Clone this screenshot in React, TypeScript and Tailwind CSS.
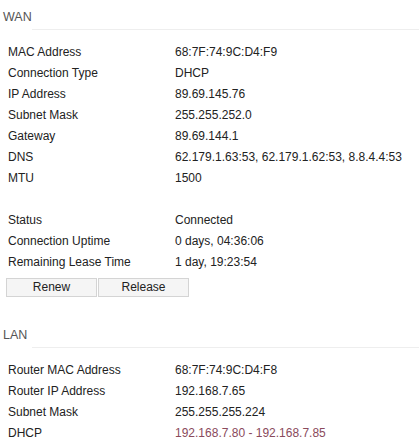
const WAN_ROWS: [string, string][] = [
  ["MAC Address", "68:7F:74:9C:D4:F9"],
  ["Connection Type", "DHCP"],
  ["IP Address", "89.69.145.76"],
  ["Subnet Mask", "255.255.252.0"],
  ["Gateway", "89.69.144.1"],
  ["DNS", "62.179.1.63:53, 62.179.1.62:53, 8.8.4.4:53"],
  ["MTU", "1500"],
];

const STATUS_ROWS: [string, string][] = [
  ["Status", "Connected"],
  ["Connection Uptime", "0 days, 04:36:06"],
  ["Remaining Lease Time", "1 day, 19:23:54"],
];

const LAN_ROWS: [string, string, boolean?][] = [
  ["Router MAC Address", "68:7F:74:9C:D4:F8"],
  ["Router IP Address", "192.168.7.65"],
  ["Subnet Mask", "255.255.255.224"],
  ["DHCP", "192.168.7.80 - 192.168.7.85", true],
];

function Heading({ title }: { title: string }) {
  return (
    <div>
      <div className="pl-[3px] text-[12.5px] leading-[15px] text-[#555]">{title}</div>
      <div className="mt-[4px] ml-[32px] border-t border-[#eeeeee]" />
    </div>
  );
}

function Row({ label, value, accent }: { label: string; value: string; accent?: boolean }) {
  return (
    <div className="flex h-[21px] items-center text-[12px] text-[#222]">
      <span className="w-[175px] shrink-0 pl-[8px]">{label}</span>
      <span className={accent ? "text-[#8a4a5c]" : ""}>{value}</span>
    </div>
  );
}

export default function App() {
  return (
    <div
      className="h-[447px] w-[419px] overflow-hidden bg-white pt-[10px]"
      style={{ fontFamily: '"Liberation Sans", Arial, sans-serif' }}
    >
      <Heading title="WAN" />
      <div className="pt-[11px]">
        {WAN_ROWS.map(([l, v]) => (
          <Row key={l} label={l} value={v} />
        ))}
        <div className="h-[21px]" />
        {STATUS_ROWS.map(([l, v]) => (
          <Row key={l} label={l} value={v} />
        ))}
      </div>
      <div className="mt-[6px] flex gap-[1px] pl-[6px]">
        <button className="h-[19px] w-[91px] border border-[#d4d4d4] bg-[#f5f5f5] text-[12px] leading-[17px] text-[#222]">
          Renew
        </button>
        <button className="h-[19px] w-[91px] border border-[#d4d4d4] bg-[#f5f5f5] text-[12px] leading-[17px] text-[#222]">
          Release
        </button>
      </div>
      <div className="mt-[31px]">
        <Heading title="LAN" />
      </div>
      <div className="pt-[11px]">
        {LAN_ROWS.map(([l, v, a]) => (
          <Row key={l} label={l} value={v} accent={a} />
        ))}
      </div>
    </div>
  );
}
